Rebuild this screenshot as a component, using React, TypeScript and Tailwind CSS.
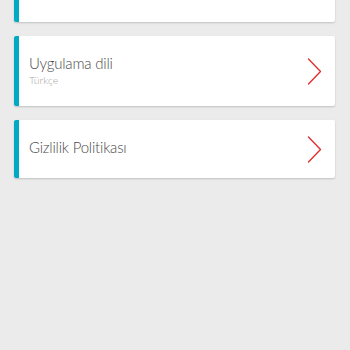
import React from 'react';

function Chevron() {
  return (
    <svg width="15" height="27" viewBox="0 0 15 27" fill="none" className="shrink-0">
      <path d="M1.5 1 L13.5 13.5 L1.5 26" stroke="#e12b2b" strokeWidth="1.3" strokeLinecap="round" strokeLinejoin="round" />
    </svg>
  );
}

function SettingCard({ title, subtitle, className = '' }: { title?: string; subtitle?: string; className?: string }) {
  return (
    <div
      className={`flex items-center bg-white rounded-[2px] border-l-[5px] border-[#00a9c4] shadow-[0_1px_2px_rgba(0,0,0,0.18)] pl-[10px] pr-[13px] ${className}`}
    >
      <div className="flex-1 min-w-0 mb-[3px]">
        {title && <p className="text-[15px] leading-[19px] tracking-[-0.2px] font-light text-[#4a4a4a]">{title}</p>}
        {subtitle && <p className="text-[10.5px] leading-[12px] font-light text-[#a6a6a6] mt-[1px]">{subtitle}</p>}
      </div>
      {title && <Chevron />}
    </div>
  );
}

export default function App() {
  return (
    <div
      className="w-[350px] h-[350px] overflow-hidden bg-[#ebebeb] pl-[14px] pr-[15px]"
      style={{ fontFamily: 'Lato, "Open Sans", sans-serif' }}
    >
      <div className="flex flex-col gap-[14px]">
        <SettingCard className="-mt-[48px] h-[70px]" />
        <SettingCard className="h-[70px]" title="Uygulama dili" subtitle="Türkçe" />
        <SettingCard className="h-[58px]" title="Gizlilik Politikası" />
      </div>
    </div>
  );
}
